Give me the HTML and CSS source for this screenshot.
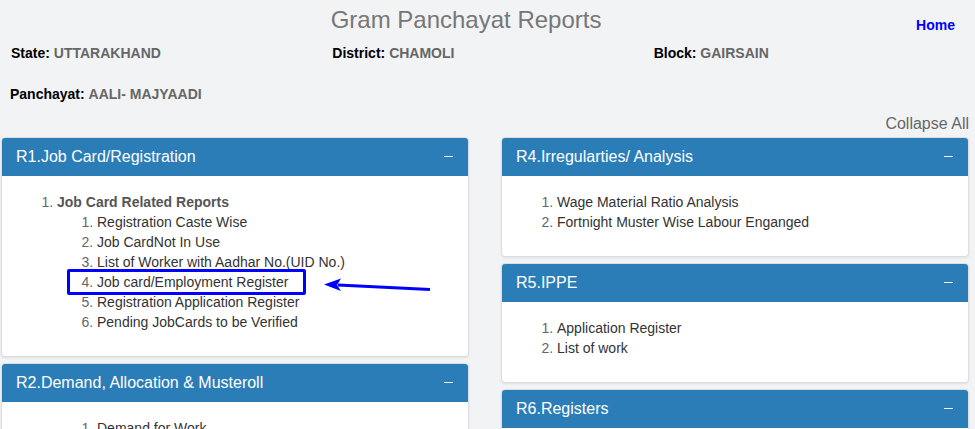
FILE: index.html
```html
<!DOCTYPE html>
<html lang="en">
<head>
    <meta charset="UTF-8">
    <meta name="viewport" content="width=device-width, initial-scale=1.0">
    <title>Gram Panchayat Reports</title>
    <link rel="stylesheet" href="styles.css">
</head>
<body>

    <div class="top-bar">
        <h1 class="page-title">Gram Panchayat Reports</h1>
        <a class="home-link" href="#">Home</a>
    </div>

    <div class="info-row">
        <div><b>State:</b> <span class="info-value">UTTARAKHAND</span></div>
        <div><b>District:</b> <span class="info-value">CHAMOLI</span></div>
        <div><b>Block:</b> <span class="info-value">GAIRSAIN</span></div>
    </div>

    <div class="info-row second">
        <div><b>Panchayat:</b> <span class="info-value">AALI- MAJYAADI</span></div>
    </div>

    <div class="collapse-row">
        <a class="collapse-all" href="#">Collapse All</a>
    </div>

    <div class="report-grid">
        <div class="report-col">
            <div class="panel">
                <div class="panel-heading">R1.Job Card/Registration <span class="toggle"></span></div>
                <div class="panel-body">
                    <ol>
                        <li><span class="group-title">Job Card Related Reports</span>
                            <ol>
                                <li><a href="#">Registration Caste Wise</a></li>
                                <li><a href="#">Job CardNot In Use</a></li>
                                <li><a href="#">List of Worker with Aadhar No.(UID No.)</a></li>
                                <li class="marked"><a href="#">Job card/Employment Register</a>
                                    <span class="mark-box"></span>
                                    <svg class="mark-arrow" width="112" height="18" viewBox="0 0 112 18">
                                        <line x1="17" y1="9" x2="109" y2="13.5" stroke="#0000ff" stroke-width="3"/>
                                        <polygon points="3,8.5 20,2.5 16,9 20,15" fill="#0000ff"/>
                                    </svg>
                                </li>
                                <li><a href="#">Registration Application Register</a></li>
                                <li><a href="#">Pending JobCards to be Verified</a></li>
                            </ol>
                        </li>
                    </ol>
                </div>
            </div>

            <div class="panel">
                <div class="panel-heading">R2.Demand, Allocation &amp; Musteroll <span class="toggle"></span></div>
                <div class="panel-body">
                    <ol class="deep">
                        <li><a href="#">Demand for Work</a></li>
                        <li><a href="#">Work Allocation</a></li>
                        <li><a href="#">Muster Roll Issued</a></li>
                    </ol>
                </div>
            </div>
        </div>

        <div class="report-col">
            <div class="panel">
                <div class="panel-heading">R4.Irregularties/ Analysis <span class="toggle"></span></div>
                <div class="panel-body">
                    <ol>
                        <li><a href="#">Wage Material Ratio Analysis</a></li>
                        <li><a href="#">Fortnight Muster Wise Labour Enganged</a></li>
                    </ol>
                </div>
            </div>

            <div class="panel">
                <div class="panel-heading">R5.IPPE <span class="toggle"></span></div>
                <div class="panel-body">
                    <ol>
                        <li><a href="#">Application Register</a></li>
                        <li><a href="#">List of work</a></li>
                    </ol>
                </div>
            </div>

            <div class="panel">
                <div class="panel-heading">R6.Registers <span class="toggle"></span></div>
                <div class="panel-body">
                    <ol>
                        <li><a href="#">Asset Register</a></li>
                    </ol>
                </div>
            </div>
        </div>
    </div>

</body>
</html>
```

FILE: styles.css
```css
body {
    font-family: "Liberation Sans", Arial, sans-serif;
    font-size: 14px;
    background-color: #f2f3f5;
    color: #333;
    margin: 0;
    padding: 0;
}

a {
    text-decoration: none;
}

.top-bar {
    display: grid;
    grid-template-columns: 1fr auto;
    padding: 7px 20px 0 0;
}

.page-title {
    margin: 0;
    padding-left: 16px;
    font-size: 24px;
    font-weight: normal;
    line-height: 26px;
    color: #777;
    text-align: center;
}

.home-link {
    margin-top: 10px;
    font-weight: bold;
    font-size: 14px;
    line-height: 16px;
    color: #0000ff;
    align-self: start;
}

.info-row {
    display: grid;
    grid-template-columns: 1fr 1fr 1fr;
    padding-left: 11px;
    margin-top: 12px;
    font-size: 14px;
    line-height: 16px;
    color: #000;
}

.info-row.second {
    margin-top: 25px;
    padding-left: 10px;
}

.info-value {
    font-weight: bold;
    color: #666;
}

.collapse-row {
    margin-top: 13px;
    padding-right: 6px;
    text-align: right;
    line-height: 18px;
}

.collapse-all {
    font-size: 16px;
    color: #666;
}

.report-grid {
    display: grid;
    grid-template-columns: 468px 468px;
    column-gap: 32px;
    margin-top: 4px;
    padding-left: 1px;
}

.panel {
    background-color: white;
    border: 1px solid #dcdde0;
    border-radius: 4px;
    box-shadow: 0 1px 2px rgba(0, 0, 0, 0.08);
    margin-bottom: 6px;
    overflow: hidden;
}

.panel-heading {
    display: flex;
    justify-content: space-between;
    align-items: center;
    margin: -1px -1px 0;
    padding: 10px 16px 10px 15px;
    background-color: #2b7db7;
    color: white;
    font-size: 16px;
    line-height: 19px;
}

.toggle {
    width: 9px;
    height: 1.5px;
    background-color: rgba(255, 255, 255, 0.9);
}

.panel-body {
    padding: 16px 15px 14px;
}

.panel-body ol {
    margin: 0 0 10px;
    padding-left: 40px;
    line-height: 20px;
    color: #666;
}

.panel-body ol ol {
    margin: 0;
}

.panel-body ol.deep {
    padding-left: 80px;
}

.panel-body li a {
    color: #333;
}

.group-title {
    font-weight: bold;
    color: #555;
}

.marked {
    position: relative;
}

.mark-box {
    position: absolute;
    left: -30px;
    top: -3px;
    width: 233px;
    height: 20px;
    border: 3px solid #0000ff;
    border-radius: 2px;
}

.mark-arrow {
    position: absolute;
    left: 224px;
    top: 4px;
}
```
